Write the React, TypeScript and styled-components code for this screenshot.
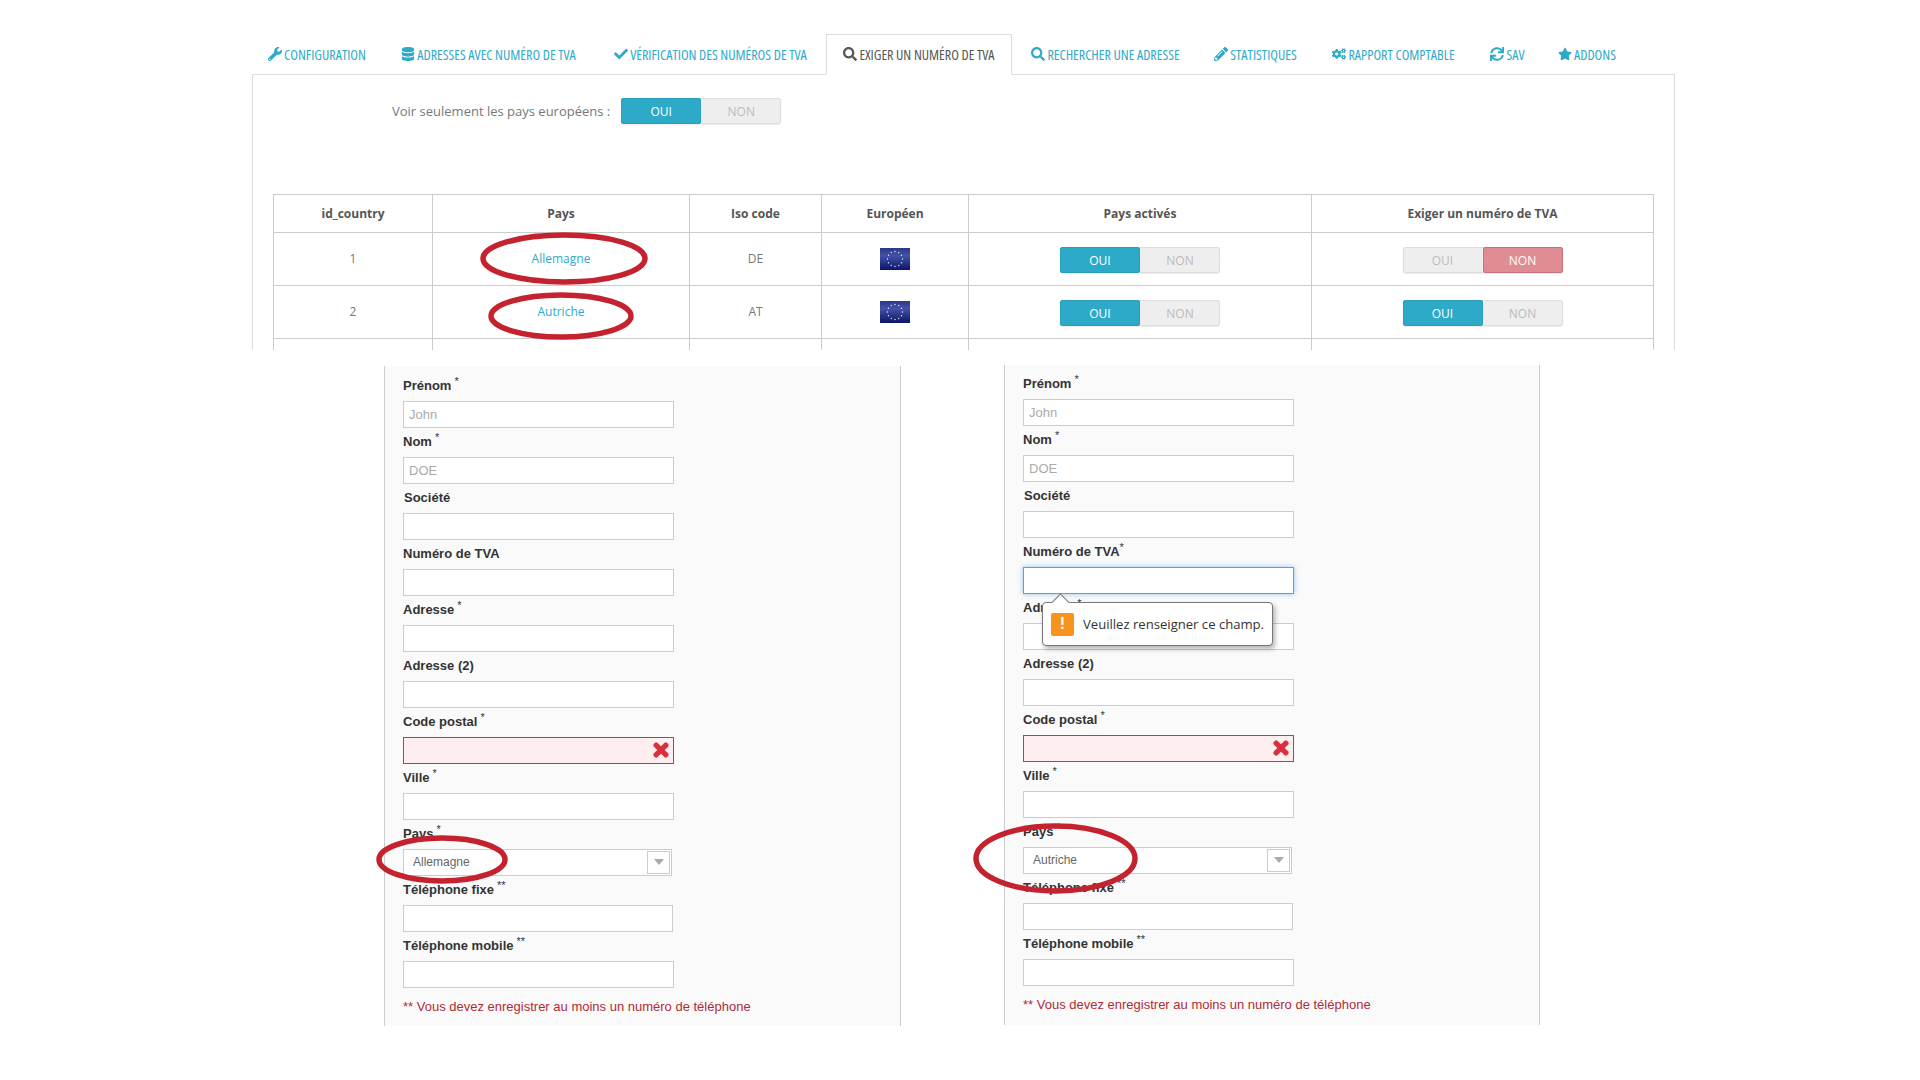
import { ReactNode } from "react";
import styled, { createGlobalStyle } from "styled-components";
import {
  FaCheck,
  FaCogs,
  FaDatabase,
  FaPencilAlt,
  FaSearch,
  FaStar,
  FaSync,
  FaTimes,
  FaWrench,
} from "react-icons/fa";

const GlobalStyle = createGlobalStyle`
  html, body {
    margin: 0;
    padding: 0;
    background: #fff;
  }
  * {
    box-sizing: border-box;
  }
`;

const Page = styled.div`
  position: relative;
  width: 1920px;
  height: 1080px;
  overflow: hidden;
  padding-top: 34px;
  background: #fff;
`;

const TopSection = styled.section`
  margin-left: 252px;
  width: 1423px;
  font-family: "Open Sans", sans-serif;
`;

const Tabs = styled.nav`
  display: flex;
  height: 41px;
  border-bottom: 1px solid #d9dde0;
`;

const Tab = styled.a<{ $active?: boolean; $width: number }>`
  display: flex;
  align-items: center;
  justify-content: center;
  gap: 2px;
  width: ${(p) => p.$width}px;
  height: 41px;
  padding-bottom: 1px;
  font-size: 14.1px;
  font-stretch: 75%;
  text-transform: uppercase;
  white-space: nowrap;
  color: ${(p) => (p.$active ? "#555" : "#2eaac9")};
  background: ${(p) => (p.$active ? "#fff" : "transparent")};
  border: 1px solid ${(p) => (p.$active ? "#d9dde0" : "transparent")};
  border-bottom-color: ${(p) => (p.$active ? "#fff" : "transparent")};
  svg {
    font-size: 14px;
    flex: none;
  }
`;

const Panel = styled.div`
  height: 275px;
  overflow: hidden;
  border-left: 1px solid #d9dde0;
  border-right: 1px solid #d9dde0;
  padding: 23px 20px 0 20px;
`;

const FilterRow = styled.div`
  display: flex;
  align-items: center;
  gap: 11px;
  padding-left: 119px;
  margin-bottom: 70px;
  font-size: 13px;
  color: #777;
`;

const Toggle = styled.span`
  display: inline-flex;
  width: 160px;
  height: 26px;
  border-radius: 3px;
  background: #eee;
  box-shadow: inset 0 0 0 1px #ddd, 0 1px 1px rgba(0, 0, 0, 0.08);
  vertical-align: middle;
`;

const ToggleOption = styled.span<{ $tone?: "on" | "off" }>`
  flex: 1;
  display: flex;
  align-items: center;
  justify-content: center;
  font-size: 12px;
  border-radius: 3px;
  color: ${(p) => (p.$tone ? "#fff" : "#bbb")};
  background: ${(p) =>
    p.$tone === "on" ? "#2eaac9" : p.$tone === "off" ? "#e08c93" : "transparent"};
  box-shadow: ${(p) =>
    p.$tone === "on"
      ? "inset 0 0 0 1px #2a9fbd"
      : p.$tone === "off"
        ? "inset 0 0 0 1px #c9727a"
        : "none"};
`;

const Table = styled.table`
  table-layout: fixed;
  width: 1380px;
  border-collapse: collapse;
  font-size: 12px;
  color: #777;
`;

const HeadCell = styled.th`
  height: 38px;
  padding: 0;
  border: 1px solid #ccc;
  font-weight: 700;
  color: #555;
  text-align: center;
`;

const Cell = styled.td`
  height: 53px;
  padding: 0 0 2px;
  border: 1px solid #ccc;
  text-align: center;
  vertical-align: middle;
`;

const CountryLink = styled.a`
  color: #2eaac9;
`;

const SwitchSlot = styled.div`
  display: flex;
  justify-content: center;
  padding-top: 4px;
`;

const FlagArt = styled.svg`
  display: block;
  margin: 2px auto 0;
  width: 30px;
  height: 22px;
`;

const Forms = styled.div`
  display: flex;
  align-items: flex-start;
  margin-top: 15px;
  padding-left: 384px;
  font-family: "Liberation Sans", Arial, sans-serif;
`;

const FormPanel = styled.form<{ $width: number; $gap: number; $lift: number; $pad: number }>`
  position: relative;
  width: ${(p) => p.$width}px;
  height: 660px;
  margin-left: ${(p) => p.$gap}px;
  margin-top: ${(p) => p.$lift}px;
  padding: ${(p) => p.$pad}px 0 0 18px;
  background: #fafafa;
  border-left: 1px solid #ccc;
  border-right: 1px solid #ccc;
`;

const Field = styled.div`
  position: relative;
  width: 271px;
  height: 56px;
`;

const Label = styled.label<{ $nudge?: boolean }>`
  display: block;
  height: 26px;
  margin-bottom: 3px;
  padding-left: ${(p) => (p.$nudge ? 1 : 0)}px;
  font-size: 13px;
  font-weight: 700;
  line-height: 27px;
  color: #333;
  white-space: nowrap;
  sup {
    font-size: 11px;
    font-weight: 400;
    line-height: 0;
  }
`;

const Input = styled.input<{ $state?: "error" | "focus"; $short?: boolean }>`
  display: block;
  width: ${(p) => (p.$short ? 270 : 271)}px;
  height: 27px;
  padding: 0 5px;
  font-family: "Liberation Sans", Arial, sans-serif;
  font-size: 13px;
  outline: none;
  border-radius: 0;
  background: ${(p) => (p.$state === "error" ? "#ffeeef" : "#fff")};
  border: 1px solid
    ${(p) =>
      p.$state === "error" ? "#a9434f" : p.$state === "focus" ? "#6a9fc0" : "#ccc"};
  box-shadow: ${(p) =>
    p.$state === "focus" ? "0 0 5px rgba(82, 168, 236, 0.65)" : "none"};
  &::placeholder {
    color: #aaa;
    opacity: 1;
  }
`;

const ErrorMark = styled(FaTimes)`
  position: absolute;
  right: 3px;
  top: 32px;
  font-size: 20px;
  color: #d9303f;
  stroke: currentColor;
  stroke-width: 40;
`;

const SelectBox = styled.div`
  display: flex;
  align-items: center;
  justify-content: space-between;
  width: 269px;
  height: 27px;
  padding: 0 1px 1px 9px;
  font-size: 12px;
  color: #666;
  background: #fff;
  border: 1px solid #ccc;
`;

const SelectButton = styled.span`
  display: flex;
  align-items: center;
  justify-content: center;
  width: 23px;
  height: 23px;
  border: 1px solid #ccc;
  background: #fff;
  &::after {
    content: "";
    border-left: 5px solid transparent;
    border-right: 5px solid transparent;
    border-top: 6px solid #aaa;
  }
`;

const PhoneNote = styled.p`
  margin: 10px 0 0;
  font-size: 13px;
  line-height: 18px;
  color: #b02a37;
  white-space: nowrap;
`;

const Bubble = styled.div`
  position: absolute;
  left: 19px;
  top: 64px;
  z-index: 2;
  display: flex;
  align-items: center;
  gap: 9px;
  width: 231px;
  height: 44px;
  padding: 0 8px;
  font-family: "Open Sans", sans-serif;
  font-size: 13.1px;
  white-space: nowrap;
  color: #333;
  background: #fff;
  border: 1px solid #777;
  border-radius: 4px;
  box-shadow: 2px 3px 5px rgba(0, 0, 0, 0.3);
  &::before {
    content: "";
    position: absolute;
    left: 11px;
    top: -7px;
    width: 12px;
    height: 12px;
    background: #fff;
    border-left: 1px solid #777;
    border-top: 1px solid #777;
    transform: rotate(45deg);
  }
`;

const WarnIcon = styled.span`
  display: flex;
  align-items: center;
  justify-content: center;
  flex: none;
  width: 23px;
  height: 23px;
  border-radius: 2px;
  background: #f7941d;
  color: #fff;
  font-family: "Liberation Sans", Arial, sans-serif;
  font-size: 16px;
  font-weight: 700;
`;

const Ring = styled.svg<{ $x: number; $y: number; $w: number; $h: number }>`
  position: absolute;
  left: ${(p) => p.$x}px;
  top: ${(p) => p.$y}px;
  width: ${(p) => p.$w}px;
  height: ${(p) => p.$h}px;
  overflow: visible;
  pointer-events: none;
`;

const tabs = [
  { label: "Configuration", icon: <FaWrench />, width: 130 },
  { label: "Adresses avec numéro de TVA", icon: <FaDatabase />, width: 213 },
  { label: "Vérification des numéros de TVA", icon: <FaCheck />, width: 231 },
  { label: "Exiger un numéro de TVA", icon: <FaSearch />, width: 186, active: true },
  { label: "Rechercher une adresse", icon: <FaSearch />, width: 187 },
  { label: "Statistiques", icon: <FaPencilAlt />, width: 113 },
  { label: "Rapport comptable", icon: <FaCogs />, width: 163 },
  { label: "SAV", icon: <FaSync />, width: 65 },
  { label: "Addons", icon: <FaStar />, width: 94 },
];

const stars = Array.from({ length: 12 }, (_, i) => (i * Math.PI) / 6);

function Flag() {
  return (
    <FlagArt viewBox="0 0 30 22">
      <defs>
        <linearGradient id="eu" x1="0" y1="0" x2="0" y2="1">
          <stop offset="0" stopColor="#2b3889" />
          <stop offset="0.35" stopColor="#4352a8" />
          <stop offset="1" stopColor="#0a1468" />
        </linearGradient>
      </defs>
      <rect width="30" height="22" fill="url(#eu)" />
      {stars.map((a) => (
        <circle
          key={a}
          cx={15 + Math.cos(a) * 7.5}
          cy={11 + Math.sin(a) * 7.5}
          r="0.7"
          fill="#eeeedd"
        />
      ))}
    </FlagArt>
  );
}

function Switch({ on, tone = "on" }: { on: boolean; tone?: "on" | "off" }) {
  return (
    <Toggle>
      <ToggleOption $tone={on ? tone : undefined}>OUI</ToggleOption>
      <ToggleOption $tone={on ? undefined : "off"}>NON</ToggleOption>
    </Toggle>
  );
}

function Row(props: {
  id: number;
  name: string;
  iso: string;
  required: boolean;
}) {
  return (
    <tr>
      <Cell>{props.id}</Cell>
      <Cell>
        <CountryLink>{props.name}</CountryLink>
      </Cell>
      <Cell>{props.iso}</Cell>
      <Cell>
        <Flag />
      </Cell>
      <Cell>
        <SwitchSlot>
          <Switch on />
        </SwitchSlot>
      </Cell>
      <Cell>
        <SwitchSlot>
          <Switch on={props.required} />
        </SwitchSlot>
      </Cell>
    </tr>
  );
}

function TextField({
  label,
  mark,
  nudge,
  placeholder,
  state,
  short,
  children,
}: {
  label: string;
  mark?: ReactNode;
  nudge?: boolean;
  placeholder?: string;
  state?: "error" | "focus";
  short?: boolean;
  children?: ReactNode;
}) {
  return (
    <Field>
      <Label $nudge={nudge}>
        {label}
        {mark}
      </Label>
      <Input placeholder={placeholder} $state={state} $short={short} />
      {state === "error" && <ErrorMark />}
      {children}
    </Field>
  );
}

function AddressForm({
  country,
  vatRequired,
  width,
  gap,
  lift,
  pad,
}: {
  country: string;
  vatRequired?: boolean;
  width: number;
  gap: number;
  lift: number;
  pad: number;
}) {
  const star = <sup> *</sup>;
  const doubleStar = <sup> **</sup>;
  return (
    <FormPanel $width={width} $gap={gap} $lift={lift} $pad={pad}>
      <TextField label="Prénom" mark={star} placeholder="John" />
      <TextField label="Nom" mark={star} placeholder="DOE" />
      <TextField label="Société" nudge />
      <TextField
        label="Numéro de TVA"
        mark={vatRequired ? <sup>*</sup> : undefined}
        state={vatRequired ? "focus" : undefined}
      >
        {vatRequired && (
          <Bubble>
            <WarnIcon>!</WarnIcon>
            Veuillez renseigner ce champ.
          </Bubble>
        )}
      </TextField>
      <TextField label="Adresse" mark={star} />
      <TextField label="Adresse (2)" />
      <TextField label="Code postal" mark={star} state="error" />
      <TextField label="Ville" mark={star} />
      <Field>
        <Label>Pays{star}</Label>
        <SelectBox>
          {country}
          <SelectButton />
        </SelectBox>
      </Field>
      <TextField label="Téléphone fixe" mark={doubleStar} short />
      <TextField label="Téléphone mobile" mark={doubleStar} />
      <PhoneNote>** Vous devez enregistrer au moins un numéro de téléphone</PhoneNote>
    </FormPanel>
  );
}

const rings = [
  { x: 483, y: 235, w: 162, h: 47 },
  { x: 491, y: 295, w: 140, h: 42 },
  { x: 379, y: 838, w: 126, h: 43 },
  { x: 976, y: 826, w: 159, h: 65 },
];

export default function App() {
  return (
    <Page>
      <GlobalStyle />
      <TopSection>
        <Tabs>
          {tabs.map((t) => (
            <Tab key={t.label} $active={t.active} $width={t.width}>
              {t.icon}
              {t.label}
            </Tab>
          ))}
        </Tabs>
        <Panel>
          <FilterRow>
            Voir seulement les pays européens :
            <Switch on />
          </FilterRow>
          <Table>
            <colgroup>
              <col width="159" />
              <col width="257" />
              <col width="132" />
              <col width="147" />
              <col width="343" />
              <col width="342" />
            </colgroup>
            <thead>
              <tr>
                <HeadCell>id_country</HeadCell>
                <HeadCell>Pays</HeadCell>
                <HeadCell>Iso code</HeadCell>
                <HeadCell>Européen</HeadCell>
                <HeadCell>Pays activés</HeadCell>
                <HeadCell>Exiger un numéro de TVA</HeadCell>
              </tr>
            </thead>
            <tbody>
              <Row id={1} name="Allemagne" iso="DE" required={false} />
              <Row id={2} name="Autriche" iso="AT" required />
              <tr>
                <Cell />
                <Cell />
                <Cell />
                <Cell />
                <Cell />
                <Cell />
              </tr>
            </tbody>
          </Table>
        </Panel>
      </TopSection>
      <Forms>
        <AddressForm country="Allemagne" width={517} gap={0} lift={1} pad={6} />
        <AddressForm country="Autriche" vatRequired width={536} gap={103} lift={0} pad={5} />
      </Forms>
      {rings.map((r) => (
        <Ring
          key={r.x}
          $x={r.x}
          $y={r.y}
          $w={r.w}
          $h={r.h}
          viewBox={`0 0 ${r.w} ${r.h}`}
        >
          <ellipse
            cx={r.w / 2}
            cy={r.h / 2}
            rx={r.w / 2}
            ry={r.h / 2}
            fill="none"
            stroke="#c4222e"
            strokeWidth="5.5"
          />
        </Ring>
      ))}
    </Page>
  );
}
